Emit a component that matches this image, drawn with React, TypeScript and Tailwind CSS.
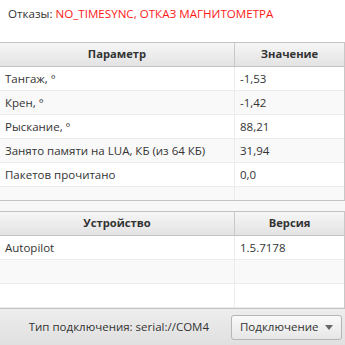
import React from "react";

const font = { fontFamily: '"Open Sans", "Noto Sans", sans-serif' };

function Header({ a, b }: { a: string; b: string }) {
  return (
    <div className="flex h-[25px] shrink-0 border-y border-[#c3c3c3] bg-gradient-to-b from-[#f6f6f6] to-[#e3e3e3] text-[11.2px] font-bold text-[#333]">
      <div className="flex w-[235px] items-center justify-center border-r border-[#c8c8c8]">{a}</div>
      <div className="flex flex-1 items-center justify-center">{b}</div>
    </div>
  );
}

function Row({ a, b, alt }: { a: string; b: string; alt?: boolean }) {
  return (
    <div className={`flex h-[24px] shrink-0 border-b border-[#ececec] text-[11.5px] text-[#333] ${alt ? "bg-[#f9f9f9]" : "bg-white"}`}>
      <div className="flex w-[235px] items-center border-r border-[#ececec] pl-[5px]">{a}</div>
      <div className="flex flex-1 items-center pl-[5px]">{b}</div>
    </div>
  );
}

export default function App() {
  return (
    <div className="flex h-[345px] w-[345px] flex-col overflow-hidden bg-white" style={font}>
      <div className="h-[42px] shrink-0 pl-[8px] pt-[5px] text-[11.6px]">
        <span className="text-[#333]">Отказы: </span>
        <span className="text-[#ff1a1a]">NO_TIMESYNC, ОТКАЗ МАГНИТОМЕТРА</span>
      </div>
      <div className="flex h-[158px] shrink-0 flex-col overflow-hidden border-r border-[#c8c8c8]">
        <Header a="Параметр" b="Значение" />
        <Row a="Тангаж, °" b="-1,53" />
        <Row a="Крен, °" b="-1,42" alt />
        <Row a="Рыскание, °" b="88,21" />
        <Row a="Занято памяти на LUA, КБ (из 64 КБ)" b="31,94" alt />
        <Row a="Пакетов прочитано" b="0,0" />
        <Row a="" b="" alt />
      </div>
      <div className="h-[11px] shrink-0 border-t border-[#c3c3c3] bg-[#f7f7f7]" />
      <div className="flex h-[97px] shrink-0 flex-col overflow-hidden border-r border-[#c8c8c8]">
        <Header a="Устройство" b="Версия" />
        <Row a="Autopilot" b="1.5.7178" />
        <Row a="" b="" alt />
        <Row a="" b="" />
        <Row a="" b="" alt />
      </div>
      <div className="flex flex-1 items-center justify-end gap-[22px] border-t border-[#c3c3c3] bg-gradient-to-b from-[#ededed] to-[#e0e0e0] pr-[3px] text-[11.5px] text-[#333]">
        <span>Тип подключения: serial://COM4</span>
        <div className="flex h-[25px] w-[111px] items-center justify-between rounded-[3px] border border-[#b5b5b5] bg-gradient-to-b from-[#fafafa] to-[#e6e6e6] pl-[8px] pr-[8px]">
          <span>Подключение</span>
          <svg width="8" height="5" viewBox="0 0 8 5"><path d="M0 0h8L4 5z" fill="#666" /></svg>
        </div>
      </div>
    </div>
  );
}
